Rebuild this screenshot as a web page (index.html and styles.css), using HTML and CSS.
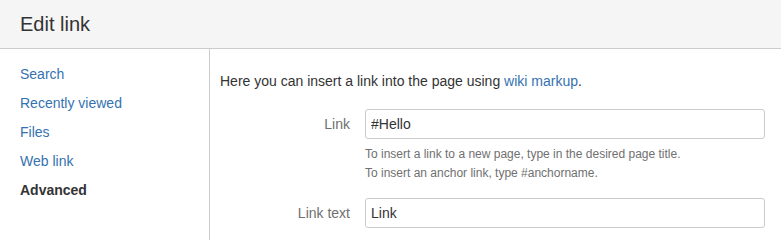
FILE: index.html
```html
<!DOCTYPE html>
<html lang="en">

<head>
    <meta charset="UTF-8">
    <title>Edit link</title>
    <link rel="stylesheet" href="styles.css">
</head>

<body>
    <div class="dialog">
        <header class="dialog-header">
            <h2>Edit link</h2>
        </header>
        <div class="dialog-body">
            <nav class="side-nav">
                <ul>
                    <li><a href="#">Search</a></li>
                    <li><a href="#">Recently viewed</a></li>
                    <li><a href="#">Files</a></li>
                    <li><a href="#">Web link</a></li>
                    <li class="active">Advanced</li>
                </ul>
            </nav>
            <div class="panel">
                <p class="intro">Here you can insert a link into the page using <a href="#">wiki markup</a>.</p>
                <form class="form">
                    <div class="field-grp">
                        <label for="link">Link</label>
                        <div class="field">
                            <input type="text" id="link" value="#Hello">
                            <div class="hint">To insert a link to a new page, type in the desired page title.</div>
                            <div class="hint">To insert an anchor link, type #anchorname.</div>
                        </div>
                    </div>
                    <div class="field-grp">
                        <label for="linkText">Link text</label>
                        <div class="field">
                            <input type="text" id="linkText" value="Link">
                        </div>
                    </div>
                </form>
            </div>
        </div>
    </div>
</body>

</html>
```

FILE: styles.css
```css
body {
    font-family: "Liberation Sans", Arial, sans-serif;
    font-size: 14px;
    color: #333;
    margin: 0;
    padding: 0;
    background: #fff;
}

a {
    color: #3572b0;
    text-decoration: none;
}

.dialog-header {
    height: 48px;
    background-color: #f5f5f5;
    border-bottom: 1px solid #ccc;
    padding: 0 20px;
    display: flex;
    align-items: center;
}

.dialog-header h2 {
    margin: 0;
    font-size: 20px;
    font-weight: normal;
    color: #333;
}

.dialog-body {
    display: flex;
    height: 191px;
}

.side-nav {
    width: 209px;
    border-right: 1px solid #ccc;
    flex-shrink: 0;
}

.side-nav ul {
    list-style: none;
    margin: 0;
    padding: 11px 20px 0;
}

.side-nav li {
    line-height: 29px;
}

.side-nav .active {
    font-weight: bold;
    color: #333;
}

.panel {
    flex: 1;
    padding: 22px 16px 0 10px;
}

.intro {
    margin: 0 0 18px 0;
    line-height: 20px;
}

.field-grp {
    display: flex;
    margin-bottom: 15px;
}

.field-grp label {
    width: 130px;
    text-align: right;
    color: #707070;
    line-height: 30px;
    padding-right: 15px;
    flex-shrink: 0;
}

.field {
    flex: 1;
}

.field input {
    box-sizing: border-box;
    width: 100%;
    height: 30px;
    padding: 0 5px;
    border: 1px solid #ccc;
    border-radius: 3px;
    font-family: inherit;
    font-size: 14px;
    color: #333;
}

.field input:first-child {
    margin-bottom: 6px;
}

.hint {
    font-size: 12px;
    color: #707070;
    line-height: 19px;
}
```
